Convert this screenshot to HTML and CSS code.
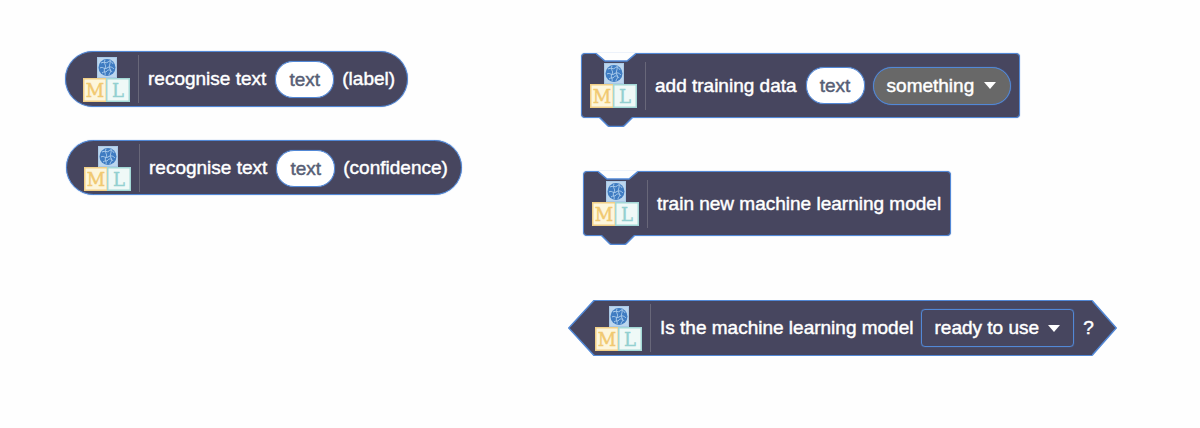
FILE: index.html
```html
<!DOCTYPE html>
<html>
<head>
    <title>Machine learning blocks</title>
    <link rel="stylesheet" href="styles.css">
</head>
<body>
    <main class="page">
        <section class="col col-left">
            <div class="block reporter">
                <svg class="icon" viewBox="0 0 47 45">
                    <rect x="14.5" y="0.5" width="19" height="20" fill="#bcd6ee" stroke="#a9c8e6"/>
                    <circle cx="24" cy="10.5" r="8.5" fill="#3f7cc2"/>
                    <path d="M18 6c3-2 5 1 7-1s4 0 5 2M17 11c3-2 4 2 7 0s5-1 7 1M19 16c2-2 4 0 5-2s4-1 5 1M22 3c-2 4 2 5 0 8s1 5 0 7M27 3c1 4-2 6 0 9s-1 4-1 6" fill="none" stroke="#a9cbec" stroke-width="1"/>
                    <rect x="0.75" y="21.75" width="22.5" height="22.5" fill="#fdf6dc" stroke="#f1cf86" stroke-width="1.5"/>
                    <rect x="23.75" y="21.75" width="22.5" height="22.5" fill="#eff9f7" stroke="#a3d8d6" stroke-width="1.5"/>
                    <text x="12" y="40" class="ml-m">M</text>
                    <text x="35" y="40" class="ml-l">L</text>
                </svg>
                <span class="divider"></span>
                <span class="label">recognise text</span>
                <span class="pill">text</span>
                <span class="label">(label)</span>
            </div>
            <div class="block reporter reporter-second">
                <svg class="icon" viewBox="0 0 47 45">
                    <rect x="14.5" y="0.5" width="19" height="20" fill="#bcd6ee" stroke="#a9c8e6"/>
                    <circle cx="24" cy="10.5" r="8.5" fill="#3f7cc2"/>
                    <path d="M18 6c3-2 5 1 7-1s4 0 5 2M17 11c3-2 4 2 7 0s5-1 7 1M19 16c2-2 4 0 5-2s4-1 5 1M22 3c-2 4 2 5 0 8s1 5 0 7M27 3c1 4-2 6 0 9s-1 4-1 6" fill="none" stroke="#a9cbec" stroke-width="1"/>
                    <rect x="0.75" y="21.75" width="22.5" height="22.5" fill="#fdf6dc" stroke="#f1cf86" stroke-width="1.5"/>
                    <rect x="23.75" y="21.75" width="22.5" height="22.5" fill="#eff9f7" stroke="#a3d8d6" stroke-width="1.5"/>
                    <text x="12" y="40" class="ml-m">M</text>
                    <text x="35" y="40" class="ml-l">L</text>
                </svg>
                <span class="divider"></span>
                <span class="label">recognise text</span>
                <span class="pill">text</span>
                <span class="label">(confidence)</span>
            </div>
        </section>

        <section class="col col-right">
            <div class="block stack stack-first">
                <svg class="notch" width="40" height="9" viewBox="0 0 40 9"><path d="M0 0h40v0.5l-9 7.5H9L0 0.5z" fill="#fefefe"/><path d="M0 0.5l9 7.500h22l9-7.500" fill="none" stroke="#5288d6" stroke-width="1.5"/></svg>
                <svg class="icon" viewBox="0 0 47 45">
                    <rect x="14.5" y="0.5" width="19" height="20" fill="#bcd6ee" stroke="#a9c8e6"/>
                    <circle cx="24" cy="10.5" r="8.5" fill="#3f7cc2"/>
                    <path d="M18 6c3-2 5 1 7-1s4 0 5 2M17 11c3-2 4 2 7 0s5-1 7 1M19 16c2-2 4 0 5-2s4-1 5 1M22 3c-2 4 2 5 0 8s1 5 0 7M27 3c1 4-2 6 0 9s-1 4-1 6" fill="none" stroke="#a9cbec" stroke-width="1"/>
                    <rect x="0.75" y="21.75" width="22.5" height="22.5" fill="#fdf6dc" stroke="#f1cf86" stroke-width="1.5"/>
                    <rect x="23.75" y="21.75" width="22.5" height="22.5" fill="#eff9f7" stroke="#a3d8d6" stroke-width="1.5"/>
                    <text x="12" y="40" class="ml-m">M</text>
                    <text x="35" y="40" class="ml-l">L</text>
                </svg>
                <span class="divider"></span>
                <span class="label">add training data</span>
                <span class="pill">text</span>
                <span class="menu menu-round">something <i class="caret"></i></span>
                <svg class="tab" width="34" height="10" viewBox="0 0 34 10"><path d="M0 0l8 8q1.500 1.500 3 1.500h12q1.500 0 3-1.500l8-8" fill="#47465f" stroke="#5288d6" stroke-width="1.5"/></svg>
            </div>
            <div class="block stack stack-second">
                <svg class="notch" width="40" height="9" viewBox="0 0 40 9"><path d="M0 0h40v0.5l-9 7.5H9L0 0.5z" fill="#fefefe"/><path d="M0 0.5l9 7.500h22l9-7.500" fill="none" stroke="#5288d6" stroke-width="1.5"/></svg>
                <svg class="icon" viewBox="0 0 47 45">
                    <rect x="14.5" y="0.5" width="19" height="20" fill="#bcd6ee" stroke="#a9c8e6"/>
                    <circle cx="24" cy="10.5" r="8.5" fill="#3f7cc2"/>
                    <path d="M18 6c3-2 5 1 7-1s4 0 5 2M17 11c3-2 4 2 7 0s5-1 7 1M19 16c2-2 4 0 5-2s4-1 5 1M22 3c-2 4 2 5 0 8s1 5 0 7M27 3c1 4-2 6 0 9s-1 4-1 6" fill="none" stroke="#a9cbec" stroke-width="1"/>
                    <rect x="0.75" y="21.75" width="22.5" height="22.5" fill="#fdf6dc" stroke="#f1cf86" stroke-width="1.5"/>
                    <rect x="23.75" y="21.75" width="22.5" height="22.5" fill="#eff9f7" stroke="#a3d8d6" stroke-width="1.5"/>
                    <text x="12" y="40" class="ml-m">M</text>
                    <text x="35" y="40" class="ml-l">L</text>
                </svg>
                <span class="divider"></span>
                <span class="label">train new machine learning model</span>
                <svg class="tab" width="34" height="10" viewBox="0 0 34 10"><path d="M0 0l8 8q1.500 1.500 3 1.500h12q1.500 0 3-1.500l8-8" fill="#47465f" stroke="#5288d6" stroke-width="1.5"/></svg>
            </div>
            <div class="hat">
                <svg class="cap" width="27" height="56" viewBox="0 0 27 56"><path d="M27 0.5H26L0.7 28 26 55.500H27" fill="#47465f" stroke="#5288d6" stroke-width="1.5"/></svg>
                <div class="hat-body">
                    <svg class="icon" viewBox="0 0 47 45">
                        <rect x="14.5" y="0.5" width="19" height="20" fill="#bcd6ee" stroke="#a9c8e6"/>
                        <circle cx="24" cy="10.5" r="8.5" fill="#3f7cc2"/>
                        <path d="M18 6c3-2 5 1 7-1s4 0 5 2M17 11c3-2 4 2 7 0s5-1 7 1M19 16c2-2 4 0 5-2s4-1 5 1M22 3c-2 4 2 5 0 8s1 5 0 7M27 3c1 4-2 6 0 9s-1 4-1 6" fill="none" stroke="#a9cbec" stroke-width="1"/>
                        <rect x="0.75" y="21.75" width="22.5" height="22.5" fill="#fdf6dc" stroke="#f1cf86" stroke-width="1.5"/>
                        <rect x="23.75" y="21.75" width="22.5" height="22.5" fill="#eff9f7" stroke="#a3d8d6" stroke-width="1.5"/>
                        <text x="12" y="40" class="ml-m">M</text>
                        <text x="35" y="40" class="ml-l">L</text>
                    </svg>
                    <span class="divider"></span>
                    <span class="label">Is the machine learning model</span>
                    <span class="menu menu-square">ready to use <i class="caret"></i></span>
                    <span class="label label-end">?</span>
                </div>
                <svg class="cap" width="25" height="56" viewBox="0 0 25 56"><path d="M0 0.5L24.300 28 0 55.500" fill="#47465f" stroke="#5288d6" stroke-width="1.5"/></svg>
            </div>
        </section>
    </main>
</body>
</html>
```

FILE: styles.css
```css
body {
    margin: 0;
    background-color: #fefefe;
    font-family: "Liberation Sans", Arial, sans-serif;
}

.page {
    display: grid;
    grid-template-columns: 568px 1fr;
    height: 428px;
    overflow: hidden;
}

.col {
    display: flex;
    flex-direction: column;
    align-items: flex-start;
}

.col-left {
    padding: 51px 0 0 65px;
}

.col-right {
    padding-top: 53px;
}

/* Blocks */
.block {
    display: flex;
    align-items: center;
    box-sizing: border-box;
    background-color: #47465f;
    border: 1px solid #5288d6;
    box-shadow: 0 0 1px #5288d6;
    position: relative;
}

.reporter {
    height: 56px;
    padding: 0 12px 0 17px;
    border-radius: 28px;
}

.reporter-second {
    height: 55px;
    margin: 33px 0 0 1px;
    padding: 1px 13px 0 17px;
}

.stack {
    height: 65px;
    padding: 0 8px;
    border-radius: 4px;
}

.stack-first {
    margin-left: 13px;
}

.stack-second {
    margin: 53px 0 0 15px;
    padding-right: 9px;
}

.notch {
    position: absolute;
    top: -1px;
    left: 14px;
}

.tab {
    position: absolute;
    bottom: -10px;
    left: 17px;
}

.hat {
    display: flex;
    margin-top: 64px;
}

.hat-body {
    display: flex;
    align-items: center;
    box-sizing: border-box;
    height: 56px;
    background-color: #47465f;
    border-top: 1px solid #5288d6;
    border-bottom: 1px solid #5288d6;
    position: relative;
    z-index: 1;
}

.cap {
    display: block;
    flex: none;
}

/* Contents */
.icon {
    width: 47px;
    height: 45px;
    flex: none;
}

.ml-m, .ml-l {
    font-family: "DejaVu Serif", "Liberation Serif", serif;
    font-size: 18px;
    stroke-width: 0.4px;
    text-anchor: middle;
}

.ml-m {
    fill: #f1c970;
    stroke: #f1c970;
}

.ml-l {
    fill: #93d0d0;
    stroke: #93d0d0;
}

.divider {
    width: 1px;
    height: 48px;
    margin: 0 9px 0 8px;
    background-color: #686779;
    flex: none;
}

.label {
    font-size: 19px;
    color: #ffffff;
    -webkit-text-stroke: 0.45px #ffffff;
    white-space: nowrap;
}

.label-end {
    margin-right: -2px;
}

.pill {
    box-sizing: border-box;
    width: 59px;
    height: 37px;
    line-height: 35px;
    margin: 0 8px 0 9px;
    text-align: center;
    font-size: 19px;
    color: #575e75;
    -webkit-text-stroke: 0.45px #575e75;
    background-color: #ffffff;
    border: 1px solid #5288d6;
    box-shadow: 0 0 1px #5288d6;
    border-radius: 18px;
}

.menu {
    display: flex;
    align-items: center;
    box-sizing: border-box;
    height: 38px;
    font-size: 19px;
    color: #ffffff;
    -webkit-text-stroke: 0.45px #ffffff;
    border: 1px solid #5288d6;
    box-shadow: 0 0 1px #5288d6;
    white-space: pre;
}

.menu-round {
    padding: 0 14px 0 13px;
    background-color: #686868;
    border-radius: 19px;
}

.menu-square {
    margin: 0 9px 0 8px;
    padding: 0 13px 0 12px;
    border-radius: 4px;
}

.caret {
    width: 0;
    height: 0;
    margin-left: 4px;
    border-left: 6px solid transparent;
    border-right: 6px solid transparent;
    border-top: 7px solid #ffffff;
}
```
